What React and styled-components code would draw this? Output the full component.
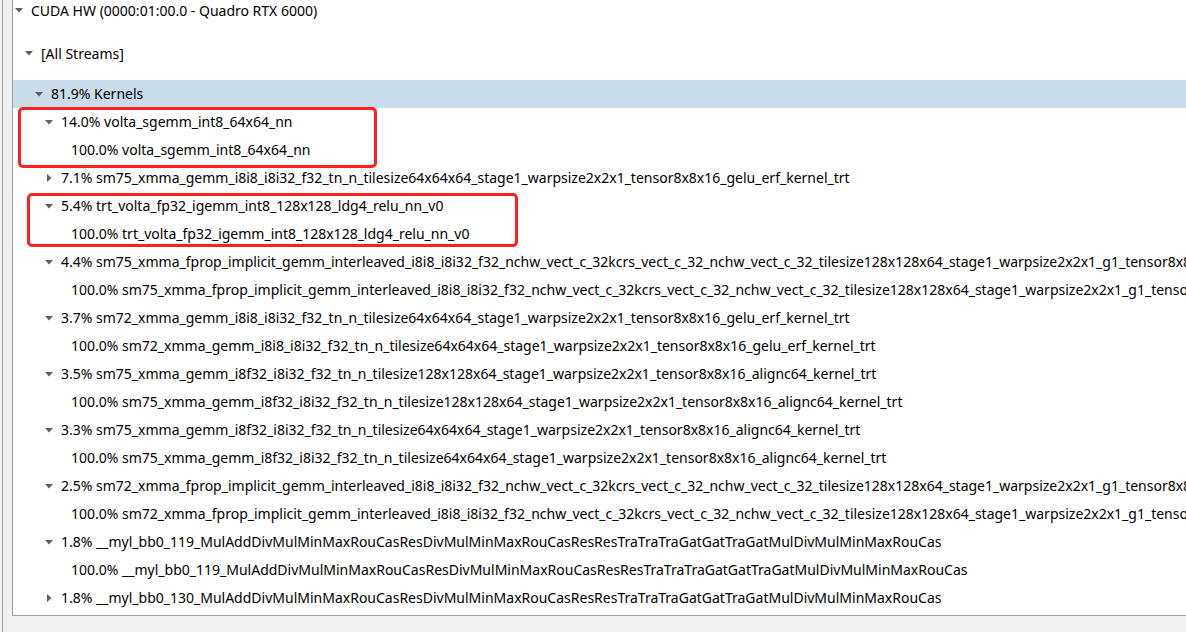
import styled, { createGlobalStyle } from "styled-components";

const GlobalStyle = createGlobalStyle`
  html, body {
    margin: 0;
    padding: 0;
    background: #f0f0f0;
    overflow: hidden;
  }
  body {
    font-family: "Noto Sans", "Liberation Sans", sans-serif;
  }
`;

const Page = styled.div`
  width: 1186px;
  height: 632px;
  display: flex;
  background: #f0f0f0;
  overflow: hidden;
`;

const Rail = styled.div`
  width: 2px;
  border-right: 1px solid #a0a0a0;
  flex-shrink: 0;
`;

const Gutter = styled.div`
  width: 9px;
  flex-shrink: 0;
`;

const Panel = styled.div`
  position: relative;
  flex: 1;
  height: 615px;
  background: #fff;
  border-left: 1px solid #a0a0a0;
  border-bottom: 1px solid #a0a0a0;
  overflow: hidden;
`;

const Scroller = styled.div`
  margin-top: -11px;
  display: flex;
  flex-direction: column;
`;

const Row = styled.div`
  display: flex;
  align-items: center;
  height: ${(p) => (p.$group ? 43 : 28)}px;
  padding-left: ${(p) => 2 + p.$level * 10}px;
  background: ${(p) => (p.$selected ? "#c9dcea" : "transparent")};
  font-size: 14px;
  color: #000;
  white-space: nowrap;
`;

const KernelList = styled.div`
  margin-top: 5px;
  display: flex;
  flex-direction: column;
`;

const Toggle = styled.span`
  width: 16px;
  height: 16px;
  flex-shrink: 0;
  display: flex;
  align-items: center;
  padding-left: ${(p) => (p.$dir === "right" ? 2 : 0)}px;
  box-sizing: border-box;
`;

const Label = styled.span`
  line-height: 1;
`;

const Callout = styled.div`
  position: absolute;
  border: 3px solid #ff1f1f;
  border-radius: 5px;
  pointer-events: none;
`;

const Arrow = ({ dir }) => (
  <Toggle $dir={dir}>
    {dir === "down" && (
      <svg width="8" height="5" viewBox="0 0 8 5">
        <path d="M0 0 L8 0 L4 4.5 Z" fill="#5f5f5f" />
      </svg>
    )}
    {dir === "right" && (
      <svg width="5" height="8" viewBox="0 0 5 8">
        <path d="M0 0 L4.5 4 L0 8 Z" fill="#5f5f5f" />
      </svg>
    )}
  </Toggle>
);

const kernels = [
  ["down", 3, "14.0% volta_sgemm_int8_64x64_nn"],
  [null, 4, "100.0% volta_sgemm_int8_64x64_nn"],
  ["right", 3, "7.1% sm75_xmma_gemm_i8i8_i8i32_f32_tn_n_tilesize64x64x64_stage1_warpsize2x2x1_tensor8x8x16_gelu_erf_kernel_trt"],
  ["down", 3, "5.4% trt_volta_fp32_igemm_int8_128x128_ldg4_relu_nn_v0"],
  [null, 4, "100.0% trt_volta_fp32_igemm_int8_128x128_ldg4_relu_nn_v0"],
  ["down", 3, "4.4% sm75_xmma_fprop_implicit_gemm_interleaved_i8i8_i8i32_f32_nchw_vect_c_32kcrs_vect_c_32_nchw_vect_c_32_tilesize128x128x64_stage1_warpsize2x2x1_g1_tensor8x8x16_kernel_trt"],
  [null, 4, "100.0% sm75_xmma_fprop_implicit_gemm_interleaved_i8i8_i8i32_f32_nchw_vect_c_32kcrs_vect_c_32_nchw_vect_c_32_tilesize128x128x64_stage1_warpsize2x2x1_g1_tensor8x8x16_kernel_trt"],
  ["down", 3, "3.7% sm72_xmma_gemm_i8i8_i8i32_f32_tn_n_tilesize64x64x64_stage1_warpsize2x2x1_tensor8x8x16_gelu_erf_kernel_trt"],
  [null, 4, "100.0% sm72_xmma_gemm_i8i8_i8i32_f32_tn_n_tilesize64x64x64_stage1_warpsize2x2x1_tensor8x8x16_gelu_erf_kernel_trt"],
  ["down", 3, "3.5% sm75_xmma_gemm_i8f32_i8i32_f32_tn_n_tilesize128x128x64_stage1_warpsize2x2x1_tensor8x8x16_alignc64_kernel_trt"],
  [null, 4, "100.0% sm75_xmma_gemm_i8f32_i8i32_f32_tn_n_tilesize128x128x64_stage1_warpsize2x2x1_tensor8x8x16_alignc64_kernel_trt"],
  ["down", 3, "3.3% sm75_xmma_gemm_i8f32_i8i32_f32_tn_n_tilesize64x64x64_stage1_warpsize2x2x1_tensor8x8x16_alignc64_kernel_trt"],
  [null, 4, "100.0% sm75_xmma_gemm_i8f32_i8i32_f32_tn_n_tilesize64x64x64_stage1_warpsize2x2x1_tensor8x8x16_alignc64_kernel_trt"],
  ["down", 3, "2.5% sm72_xmma_fprop_implicit_gemm_interleaved_i8i8_i8i32_f32_nchw_vect_c_32kcrs_vect_c_32_nchw_vect_c_32_tilesize128x128x64_stage1_warpsize2x2x1_g1_tensor8x8x16_kernel_trt"],
  [null, 4, "100.0% sm72_xmma_fprop_implicit_gemm_interleaved_i8i8_i8i32_f32_nchw_vect_c_32kcrs_vect_c_32_nchw_vect_c_32_tilesize128x128x64_stage1_warpsize2x2x1_g1_tensor8x8x16_kernel_trt"],
  ["down", 3, "1.8% __myl_bb0_119_MulAddDivMulMinMaxRouCasResDivMulMinMaxRouCasResResTraTraTraGatGatTraGatMulDivMulMinMaxRouCas"],
  [null, 4, "100.0% __myl_bb0_119_MulAddDivMulMinMaxRouCasResDivMulMinMaxRouCasResResTraTraTraGatGatTraGatMulDivMulMinMaxRouCas"],
  ["right", 3, "1.8% __myl_bb0_130_MulAddDivMulMinMaxRouCasResDivMulMinMaxRouCasResResTraTraTraGatGatTraGatMulDivMulMinMaxRouCas"],
];

const App = () => {
  return (
    <Page>
      <GlobalStyle />
      <Rail />
      <Gutter />
      <Panel>
        <Scroller>
          <Row $group $level={0}>
            <Arrow dir="down" />
            <Label>CUDA HW (0000:01:00.0 - Quadro RTX 6000)</Label>
          </Row>
          <Row $group $level={1}>
            <Arrow dir="down" />
            <Label>[All Streams]</Label>
          </Row>
          <KernelList>
            <Row $level={2} $selected>
              <Arrow dir="down" />
              <Label>81.9% Kernels</Label>
            </Row>
            {kernels.map(([dir, level, text], i) => (
              <Row key={i} $level={level}>
                <Arrow dir={dir} />
                <Label>{text}</Label>
              </Row>
            ))}
          </KernelList>
        </Scroller>
        <Callout style={{ left: 5, top: 107, width: 353, height: 55 }} />
        <Callout style={{ left: 14, top: 193, width: 485, height: 48 }} />
      </Panel>
    </Page>
  );
};

export default App;
